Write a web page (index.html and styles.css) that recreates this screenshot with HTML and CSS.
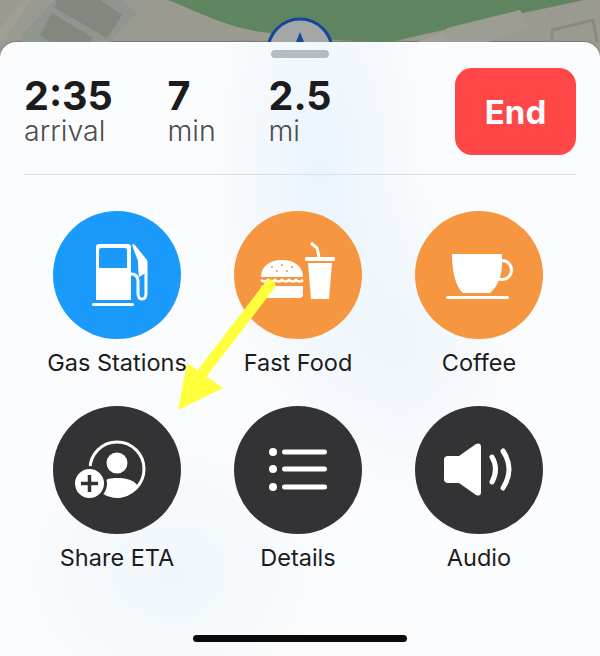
FILE: index.html
```html
<!DOCTYPE html>
<html>
<head>
    <title>Navigation</title>
    <link rel="stylesheet" href="styles.css">
</head>
<body>
    <div class="map">
        <svg width="600" height="42" viewBox="0 0 600 42">
            <path d="M0 30 L22 0 L30 0 L4 42 L0 42 Z" fill="#9f9f96"/>
            <path d="M55 0 L122 0 L137 13 L110 42 L22 42 L24 32 Z" fill="#8f9690"/>
            <path d="M57 0 L100 0 L122 15 L107 38 L55 8 Z" fill="#82877f"/>
            <path d="M40 35 L52 13 L93 38 L90 42 L50 42 Z" fill="#82877f"/>
            <path d="M168 0 C200 12 225 28 270 33 C310 38 350 42 392 42 C440 30 520 14 584 0 Z" fill="#5f8560"/>
            <path d="M447 28 L520 10 L530 28 L487 42 L447 42 Z" fill="#9e9d94"/>
            <path d="M417 42 L444 32 L447 42 Z" fill="#a0a097"/>
            <path d="M552 42 L552 30 L593 20 L597 42" fill="none" stroke="#8a8a82" stroke-width="3"/>
            <circle cx="300" cy="51" r="32" fill="#a4a6a8" stroke="#1546a0" stroke-width="3"/>
            <path d="M300 32 L304 42 L296 42 Z" fill="#1546a0"/>
        </svg>
    </div>

    <div class="sheet">
        <div class="handle"></div>

        <div class="trip">
            <div class="stat stat-arrival">
                <div class="stat-value">2:35</div>
                <div class="stat-label">arrival</div>
            </div>
            <div class="stat stat-min">
                <div class="stat-value">7</div>
                <div class="stat-label">min</div>
            </div>
            <div class="stat">
                <div class="stat-value">2.5</div>
                <div class="stat-label">mi</div>
            </div>
            <button class="end-btn">End</button>
        </div>

        <div class="actions">
            <div class="action">
                <div class="circle blue">
                    <svg width="128" height="128" viewBox="0 0 128 128">
                        <path fill-rule="evenodd" fill="#fff" d="M46 33 H75 Q78 33 78 36 V89 H43 V36 Q43 33 46 33 Z M48 37 Q46 37 46 39 V57 H74 V39 Q74 37 72 37 Z"/>
                        <rect x="39" y="92" width="42" height="3" rx="1.5" fill="#fff"/>
                        <path d="M78 63 Q85 63 85 70 V82 Q85 88 89 88 Q93 88 93 82 V50" fill="none" stroke="#fff" stroke-width="3"/>
                        <path d="M79 34 L81 33 L94 49 V60 Q94 62 91 63 L86 66 Q85 58 85 50 Z" fill="#fff"/>
                    </svg>
                </div>
                <div class="action-label">Gas Stations</div>
            </div>
            <div class="action">
                <div class="circle orange">
                    <svg width="128" height="128" viewBox="0 0 128 128">
                        <path fill-rule="evenodd" fill="#fff" d="M27 66 C27 55 36 49 48 49 C60 49 69 55 69 66 Z"/>
                        <g fill="#f69640">
                            <circle cx="38" cy="56" r="1"/><circle cx="48" cy="54" r="1"/><circle cx="58" cy="56" r="1"/>
                            <circle cx="43" cy="60" r="1"/><circle cx="53" cy="60" r="1"/>
                        </g>
                        <path d="M27 69 Q31 72 34 69 Q38 72 41 69 Q45 72 48 69 Q52 72 55 69 Q59 72 62 69 Q66 72 69 69" fill="none" stroke="#fff" stroke-width="2.5"/>
                        <path d="M27 75 H69 V83 Q69 87 65 87 H31 Q27 87 27 83 Z" fill="#fff"/>
                        <rect x="71" y="46" width="30" height="4" rx="1.5" fill="#fff"/>
                        <path d="M74 52 H98 L95 88 H77 Z" fill="#fff"/>
                        <path d="M85 46 L83 37 L77 32" fill="none" stroke="#fff" stroke-width="3"/>
                    </svg>
                </div>
                <div class="action-label">Fast Food</div>
            </div>
            <div class="action">
                <div class="circle orange">
                    <svg width="128" height="128" viewBox="0 0 128 128">
                        <circle cx="87" cy="59" r="9.5" fill="none" stroke="#fff" stroke-width="3"/>
                        <path d="M37 43 H87 V52 C87 66 82 76 75 82 H48 C41 76 37 62 37 43 Z" fill="#fff"/>
                        <rect x="31" y="85" width="63" height="3" rx="1.5" fill="#fff"/>
                    </svg>
                </div>
                <div class="action-label">Coffee</div>
            </div>
            <div class="action">
                <div class="circle dark">
                    <svg width="128" height="128" viewBox="0 0 128 128">
                        <circle cx="64" cy="63" r="27" fill="none" stroke="#fff" stroke-width="3"/>
                        <circle cx="64" cy="57" r="10.5" fill="#fff"/>
                        <path d="M46 80 C52 72 58 72 64 72 C72 72 80 73 85 80 C78 90 70 92 64 92 C56 92 50 88 46 80 Z" fill="#fff"/>
                        <circle cx="36.5" cy="77.5" r="16" fill="#fff" stroke="#333335" stroke-width="3"/>
                        <path d="M28 77.5 H45 M36.5 69 V86" stroke="#333335" stroke-width="3.5"/>
                    </svg>
                </div>
                <div class="action-label">Share ETA</div>
            </div>
            <div class="action">
                <div class="circle dark">
                    <svg width="128" height="128" viewBox="0 0 128 128">
                        <g fill="#fff">
                            <circle cx="39" cy="46" r="4"/><circle cx="39" cy="63" r="4"/><circle cx="39" cy="81" r="4"/>
                            <rect x="48" y="43.500" width="45" height="5" rx="2.5"/>
                            <rect x="48" y="60.500" width="45" height="5" rx="2.5"/>
                            <rect x="48" y="78.500" width="45" height="5" rx="2.500"/>
                        </g>
                    </svg>
                </div>
                <div class="action-label">Details</div>
            </div>
            <div class="action">
                <div class="circle dark">
                    <svg width="128" height="128" viewBox="0 0 128 128">
                        <path d="M33 50 H44 L61 38 Q66 36 66 41 V86 Q66 91 61 89 L44 77 H33 Q29 77 29 73 V54 Q29 50 33 50 Z" fill="#fff"/>
                        <path d="M77 51 Q84 63 77 76" fill="none" stroke="#fff" stroke-width="5" stroke-linecap="round"/>
                        <path d="M88 45 Q100 63 88 82" fill="none" stroke="#fff" stroke-width="5" stroke-linecap="round"/>
                    </svg>
                </div>
                <div class="action-label">Audio</div>
            </div>
        </div>

        <div class="home-bar"></div>
    </div>

    <!-- annotation drawn on top of the screenshot -->
    <svg class="arrow" width="600" height="656" viewBox="0 0 600 656">
        <path d="M270 285 L203 372" stroke="#ffff3c" stroke-width="11" stroke-linecap="round"/>
        <path d="M187 363 L223 388 L178 410 Z" fill="#ffff3c"/>
    </svg>
</body>
</html>
```

FILE: styles.css
```css
* {
    box-sizing: border-box;
}

body {
    margin: 0;
    width: 600px;
    height: 656px;
    overflow: hidden;
    position: relative;
    background-color: #9a9a90;
    font-family: Inter, "Liberation Sans", sans-serif;
    color: #1c1c1e;
}

.map {
    height: 42px;
}

.map svg {
    display: block;
}

.sheet {
    height: 614px;
    padding: 8px 24px 0;
    border-radius: 16px 16px 0 0;
    display: flex;
    flex-direction: column;
    background-color: #fbfcfd;
    background-image:
        radial-gradient(ellipse 110px 260px at 320px 130px, #eaf4fd, transparent),
        radial-gradient(ellipse 160px 140px at 170px 530px, #f0f7fc, transparent),
        radial-gradient(ellipse 120px 160px at 400px 300px, #eff6fd, transparent);
    box-shadow: 0 -1px 1px rgba(0, 0, 0, 0.2);
}

.handle {
    width: 58px;
    height: 8px;
    margin: 0 auto;
    border-radius: 4px;
    background-color: #b6bbc1;
}

.trip {
    display: flex;
    height: 117px;
    padding-top: 10px;
    border-bottom: 1px solid #d9dfe5;
}

.stat {
    width: 101px;
}

.stat-arrival {
    width: 143.500px;
}

.stat-value {
    font-size: 39.500px;
    line-height: 40px;
    font-weight: 700;
    margin-top: 8px;
}

.stat-label {
    font-size: 28.5px;
    line-height: 30px;
    font-weight: 300;
    color: #4c4c4e;
}

.end-btn {
    width: 121px;
    height: 87px;
    margin-left: auto;
    border: none;
    border-radius: 17px;
    background-color: #ff4747;
    color: white;
    font-family: inherit;
    font-size: 33px;
    font-weight: 700;
}

.actions {
    display: grid;
    grid-template-columns: repeat(3, 181px);
    grid-auto-rows: 195px;
    margin: 36px 0 0 2.500px;
}

.action {
    display: flex;
    flex-direction: column;
    align-items: center;
}

.circle {
    width: 128px;
    height: 128px;
    flex-shrink: 0;
    border-radius: 50%;
}

.circle svg {
    display: block;
}

.blue {
    background-color: #1a9bfc;
}

.orange {
    background-color: #f69640;
}

.dark {
    background-color: #333335;
}

.action-label {
    margin-top: 8px;
    font-size: 23.500px;
    line-height: 32px;
    white-space: nowrap;
}

.home-bar {
    width: 214px;
    height: 7px;
    margin: auto auto 14px;
    border-radius: 4px;
    background-color: #0a0a0a;
}

.arrow {
    position: absolute;
    left: 0;
    top: 0;
    pointer-events: none;
}
```
